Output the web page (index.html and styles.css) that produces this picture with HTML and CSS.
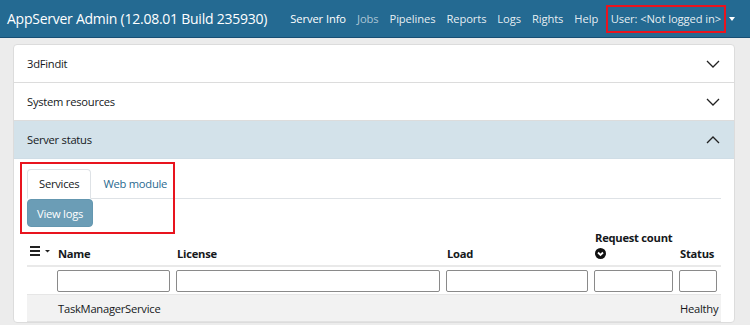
FILE: index.html
```html
<!DOCTYPE html>
<html>
<head>
<meta charset="utf-8">
<link rel="stylesheet" href="styles.css">
</head>
<body>
<header class="navbar">
  <div class="brand">AppServer Admin (12.08.01 Build 235930)</div>
  <nav class="nav">
    <a class="nav-link active">Server Info</a>
    <a class="nav-link muted">Jobs</a>
    <a class="nav-link">Pipelines</a>
    <a class="nav-link">Reports</a>
    <a class="nav-link">Logs</a>
    <a class="nav-link">Rights</a>
    <a class="nav-link">Help</a>
    <a class="nav-link user">User: &lt;Not logged in&gt;</a>
    <span class="caret"></span>
  </nav>
</header>
<main class="main">
  <div class="card">
    <div class="acc-header">
      <span>3dFindit</span>
      <svg class="chev" width="14" height="8" viewBox="0 0 14 8"><path d="M1 1 L7 7 L13 1" fill="none" stroke="#222" stroke-width="1.3"/></svg>
    </div>
    <div class="acc-header">
      <span>System resources</span>
      <svg class="chev" width="14" height="8" viewBox="0 0 14 8"><path d="M1 1 L7 7 L13 1" fill="none" stroke="#222" stroke-width="1.3"/></svg>
    </div>
    <div class="acc-header open">
      <span>Server status</span>
      <svg class="chev" width="14" height="8" viewBox="0 0 14 8"><path d="M1 7 L7 1 L13 7" fill="none" stroke="#222" stroke-width="1.3"/></svg>
    </div>
    <div class="acc-body">
      <div class="highlight"></div>
      <ul class="tabs">
        <li class="tab active">Services</li>
        <li class="tab">Web module</li>
      </ul>
      <button class="btn">View logs</button>
      <table class="grid">
        <colgroup>
          <col class="c0"><col class="c1"><col class="c2"><col class="c3"><col class="c4"><col class="c5">
        </colgroup>
        <thead>
          <tr class="head">
            <th class="menu-cell">
              <svg width="22" height="10" viewBox="0 0 22 10"><rect x="0" y="0" width="10" height="2" fill="#222"/><rect x="0" y="4" width="10" height="2" fill="#222"/><rect x="0" y="8" width="10" height="2" fill="#222"/><path d="M15 4 L20 4 L17.5 6.5 Z" fill="#222"/></svg>
            </th>
            <th>Name</th>
            <th>License</th>
            <th>Load</th>
            <th>Request count<br><svg class="sort" width="11" height="11" viewBox="0 0 11 11"><circle cx="5.5" cy="5.5" r="5.5" fill="#111"/><path d="M3 4.5 L5.5 7 L8 4.5" fill="none" stroke="#fff" stroke-width="1.8"/></svg></th>
            <th>Status</th>
          </tr>
          <tr class="filters">
            <td></td>
            <td><input type="text"></td>
            <td><input type="text"></td>
            <td><input type="text"></td>
            <td><input type="text"></td>
            <td><input type="text"></td>
          </tr>
        </thead>
        <tbody>
          <tr class="row">
            <td></td>
            <td>TaskManagerService</td>
            <td></td>
            <td></td>
            <td></td>
            <td>Healthy</td>
          </tr>
        </tbody>
      </table>
    </div>
  </div>
</main>
</body>
</html>
```
FILE: styles.css
```css
* { box-sizing: border-box; }
body {
  margin: 0;
  background: #ececec;
  font-family: "Open Sans", "Noto Sans", sans-serif;
  font-size: 11.2px;
  letter-spacing: -0.25px;
  color: #15181b;
  overflow: hidden;
}
.navbar {
  height: 38px;
  background: #246a92;
  border-bottom: 1px solid #174e73;
  display: flex;
  align-items: center;
  padding: 0 7px;
}
.brand {
  color: #fff;
  font-size: 14px;
  letter-spacing: -0.25px;
  white-space: nowrap;
}
.nav {
  margin-left: auto;
  display: flex;
  align-items: center;
  letter-spacing: -0.1px;
}
.nav-link {
  color: rgba(255,255,255,.9);
  padding: 0 5.5px;
  white-space: nowrap;
}
.nav-link.active { color: #fff; }
.nav-link.muted { color: rgba(255,255,255,.62); }
.nav-link.user {
  border: 2px solid #e8141e;
  height: 28px;
  line-height: 24px;
  padding: 0 3px;
  margin-left: 2px;
}
.caret {
  width: 0; height: 0;
  border-left: 3px solid transparent;
  border-right: 3px solid transparent;
  border-top: 4px solid #fff;
  margin: 0 8px 0 3px;
}
.main {
  padding: 6px 15px 0 13px;
}
.card {
  background: #fff;
  border: 1px solid #dcdcdc;
  border-radius: 4px;
  overflow: hidden;
}
.acc-header {
  height: 38px;
  display: flex;
  align-items: center;
  justify-content: space-between;
  padding: 0 14px 0 13px;
  border-bottom: 1px solid #dcdcdc;
}
.acc-header.open {
  background: #d3e2ea;
  border-bottom-color: #cfdde6;
}
.acc-body {
  position: relative;
  padding: 10px 13px 0 13px;
}
.highlight {
  position: absolute;
  left: 6px;
  top: 3px;
  width: 155px;
  height: 72px;
  border: 2px solid #e8141e;
  pointer-events: none;
}
.tabs {
  list-style: none;
  margin: 0;
  padding: 0;
  display: flex;
  border-bottom: 1px solid #dee2e6;
}
.tab {
  height: 30px;
  line-height: 28px;
  padding: 0 11px;
  color: #2a6a90;
  border: 1px solid transparent;
  border-radius: 4px 4px 0 0;
  margin-bottom: -1px;
}
.tab.active {
  color: #15181b;
  border-color: #dee2e6 #dee2e6 #fff;
  background: #fff;
}
.btn {
  font: inherit;
  letter-spacing: inherit;
  color: #fff;
  background: #6b9db6;
  border: 1px solid #6497b0;
  border-radius: 4px;
  height: 28px;
  padding: 0 9px;
  display: block;
}
.grid {
  width: 100%;
  table-layout: fixed;
  border-collapse: collapse;
  margin-top: 3px;
}
.c0 { width: 28px; }
.c1 { width: 119px; }
.c2 { width: 270px; }
.c3 { width: 148px; }
.c4 { width: 85px; }
.c5 { width: 44px; }
.head th {
  text-align: left;
  vertical-align: bottom;
  font-weight: bold;
  padding: 0 0 3px 3px;
  line-height: 16px;
  border-bottom: 2px solid #e9e9e9;
  white-space: nowrap;
}
.head th.menu-cell { padding-left: 3px; padding-bottom: 5px; }
.sort { vertical-align: -1px; }
.filters td {
  padding: 3px 4px 2px 2px;
}
.filters input {
  display: block;
  width: 100%;
  height: 22px;
  border: 1px solid #8a8a8a;
  border-radius: 2px;
  margin: 0;
}
.row td {
  background: #f2f2f2;
  height: 27px;
  padding: 0 0 0 3px;
  border-top: 1px solid #e6e6e6;
  border-bottom: 1px solid #e2e2e2;
  white-space: nowrap;
}
```
